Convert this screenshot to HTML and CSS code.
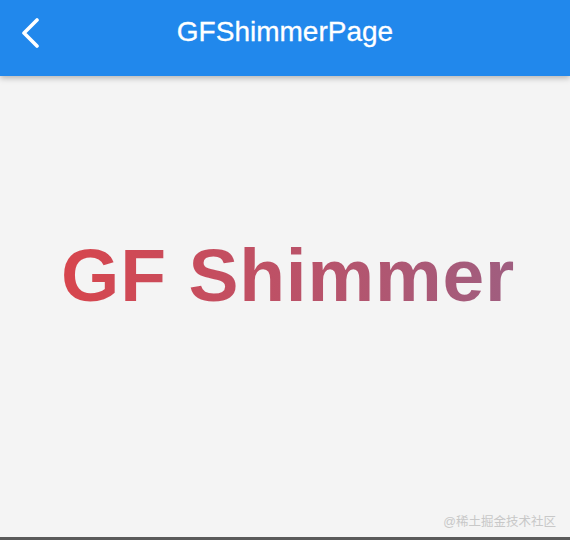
FILE: index.html
```html
<!DOCTYPE html>
<html>
<head>
<meta charset="utf-8">
<link rel="stylesheet" href="styles.css">
</head>
<body>
<div class="page">
  <header class="appbar">
    <button class="back" aria-label="back">
      <svg width="22" height="30" viewBox="0 0 22 30"><path d="M17 2 L4 15 L17 28" fill="none" stroke="#fff" stroke-width="3.6" stroke-linecap="round" stroke-linejoin="round"/></svg>
    </button>
    <h1 class="title">GFShimmerPage</h1>
  </header>
  <main class="content">
    <div class="shimmer">GF Shimmer</div>
    <div class="watermark">@稀土掘金技术社区</div>
  </main>
  <div class="bottomline"></div>
</div>
</body>
</html>
```
FILE: styles.css
```css
html, body { margin: 0; padding: 0; }
body { width: 570px; height: 540px; overflow: hidden; background: #f4f4f4; font-family: "Liberation Sans", Arial, sans-serif; }
.page { display: flex; flex-direction: column; height: 540px; }
.appbar { height: 76px; background: #2188ec; display: flex; align-items: center; justify-content: center; position: relative; box-shadow: 0 2px 6px rgba(0,0,0,0.28); z-index: 1; }
.back { position: absolute; left: 19px; top: 17px; background: none; border: 0; padding: 0; width: 24px; height: 32px; display: flex; align-items: center; justify-content: center; }
.title { margin: 0; color: #fff; font-weight: normal; font-size: 28px; padding-bottom: 12px; -webkit-text-stroke: 0.3px #fff; }
.content { flex: 1; display: flex; flex-direction: column; align-items: center; position: relative; }
.shimmer { margin-top: 162px; font-size: 75px; font-weight: bold; line-height: 1; letter-spacing: 0.8px; background: linear-gradient(90deg, #d8454c 0%, #c24f62 40%, #9f5e80 100%); -webkit-background-clip: text; background-clip: text; color: transparent; padding-left: 6px; }
.watermark { position: absolute; right: 14px; bottom: 7px; color: #c8c8c8; font-size: 12.5px; font-family: "Liberation Sans", "Noto Sans CJK SC", sans-serif; }
.bottomline { height: 3px; background: #5a5a5a; }
```
